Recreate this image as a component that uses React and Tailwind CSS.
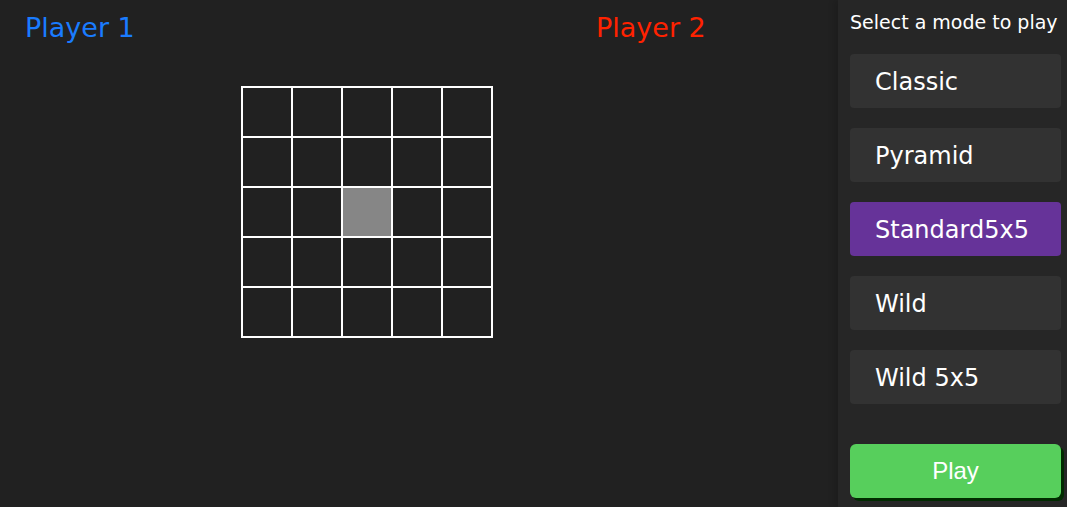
import React from 'react';

const MODES = ['Classic', 'Pyramid', 'Standard5x5', 'Wild', 'Wild 5x5'];

const Board = ({ size = 5, highlight = [2, 2] }) => (
    <div className="grid grid-cols-5 gap-[2px] p-[2px] bg-white w-fit">
        {Array.from({ length: size * size }).map((_, i) => {
            const row = Math.floor(i / size);
            const col = i % size;
            const active = row === highlight[0] && col === highlight[1];
            return (
                <div
                    key={i}
                    className={`w-[48px] h-[48px] ${active ? 'bg-[#868686]' : 'bg-[#212121]'}`}
                />
            );
        })}
    </div>
);

const ModeButton = ({ label, selected }) => (
    <button
        className={`h-[54px] w-[211px] rounded-[4px] pl-[25px] pt-[2px] text-left text-[24px] text-white ${selected ? 'bg-[#663399]' : 'bg-[#323232]'}`}
        style={{ fontFamily: '"DejaVu Sans", sans-serif' }}
    >
        {label}
    </button>
);

export default function App() {
    return (
        <div className="flex h-[507px] w-[1067px] bg-[#212121] overflow-hidden" style={{ fontFamily: '"DejaVu Sans", sans-serif' }}>
            <main className="flex-1 flex flex-col">
                <div className="flex pt-[11px] pl-[25px] text-[27px] leading-[34px]">
                    <span className="w-[571px] text-[#1a7cff]">Player 1</span>
                    <span className="text-[#ff2200]">Player 2</span>
                </div>
                <div className="mt-[41px] ml-[241px]">
                    <Board />
                </div>
            </main>
            <aside className="w-[229px] bg-[#262626] shadow-[-4px_0_6px_rgba(0,0,0,0.12)] flex flex-col pl-[12px] pt-[10px]">
                <p className="text-[19px] leading-[24px] text-white whitespace-nowrap">Select a mode to play</p>
                <div className="mt-[20px] flex flex-col gap-[20px]">
                    {MODES.map((m) => (
                        <ModeButton key={m} label={m} selected={m === 'Standard5x5'} />
                    ))}
                </div>
                <button
                    className="mt-[40px] h-[54px] w-[211px] rounded-[6px] bg-[#57cf5c] text-white text-[24px] shadow-[3px_3px_0_#012b00]"
                    style={{ fontFamily: '"Liberation Sans", Arial, sans-serif' }}
                >
                    Play
                </button>
            </aside>
        </div>
    );
}
